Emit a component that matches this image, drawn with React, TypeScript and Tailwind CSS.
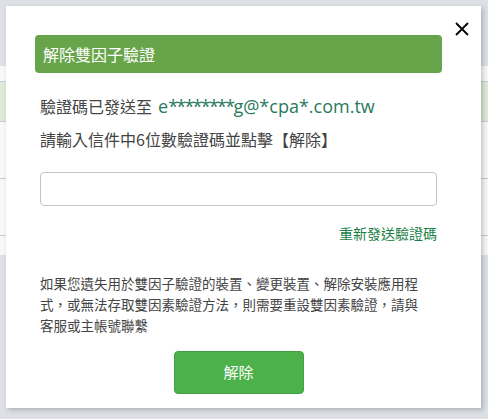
import React from "react";

export default function App() {
  const cjk = { fontFamily: '"Noto Sans CJK TC", "Noto Sans", sans-serif' };
  return (
    <div className="relative w-[488px] h-[419px] overflow-hidden bg-[#dde1e5]" style={cjk}>
      {/* background page */}
      <div className="flex flex-col">
        <div className="h-[66px] bg-[#dde1e5]" />
        <div className="h-[16px] bg-[#f7f8f9] border-b border-[#c9cbcd]" />
        <div className="h-[40px] bg-[#dcebd7] border-b border-[#c9cbcd]" />
        <div className="h-[57px] bg-[#f7f8f9] border-b border-[#c9cbcd]" />
        <div className="h-[57px] bg-[#f7f8f9] border-b border-[#c9cbcd]" />
        <div className="h-[19px] bg-[#f7f8f9]" />
        <div className="flex-1 bg-[#dde1e5]" />
      </div>

      {/* modal */}
      <div className="absolute left-[6px] top-[6px] w-[475px] h-[402px] bg-white shadow-[2px_2px_5px_rgba(0,0,0,0.22)] pl-[34px] pr-[44px] pt-[29px] flex flex-col">
        <button className="absolute right-[12px] top-[16px] w-[14px] h-[14px]">
          <svg width="14" height="14" viewBox="0 0 14 14">
            <path d="M1 1 L13 13 M13 1 L1 13" stroke="#000" strokeWidth="1.8" fill="none" />
          </svg>
        </button>

        <div className="-mx-[5px] h-[38px] rounded-[4px] bg-[#68a54a] flex items-center pl-[8px] text-white text-[16px]">
          解除雙因子驗證
        </div>

        <div className="mt-[20px] h-[26px] flex items-center text-[#444] text-[16px] whitespace-nowrap">
          <span>驗證碼已發送至</span>
          <span
            className="ml-[6px] text-[#2a7a5c] text-[18px]"
            style={{ fontFamily: '"Open Sans", "Noto Sans", sans-serif' }}
          >
            e<span className="tracking-[-1.75px]">********</span>g@*cpa*.com.tw
          </span>
        </div>

        <div className="mt-[9px] h-[22px] flex items-center text-[#444] text-[16px] whitespace-nowrap">
          請輸入信件中6位數驗證碼並點擊【解除】
        </div>

        <input
          className="mt-[22px] h-[34px] w-full rounded-[4px] border border-[#c4c4c4] bg-white outline-none"
          type="text"
        />

        <div className="mt-[18px] h-[18px] flex justify-end items-center text-[14px] text-[#1a7f46]">
          重新發送驗證碼
        </div>

        <div className="mt-[31px] flex flex-col text-[13.5px] leading-[21px] text-[#444] whitespace-nowrap">
          <span>如果您遺失用於雙因子驗證的裝置、變更裝置、解除安裝應用程</span>
          <span>式，或無法存取雙因素驗證方法，則需要重設雙因素驗證，請與</span>
          <span>客服或主帳號聯繫</span>
        </div>

        <div className="mt-[15px] flex justify-center">
          <button className="w-[130px] h-[43px] rounded-[4px] bg-[#4cb14b] border border-[#45a045] text-white text-[15px]">
            解除
          </button>
        </div>
      </div>
    </div>
  );
}
